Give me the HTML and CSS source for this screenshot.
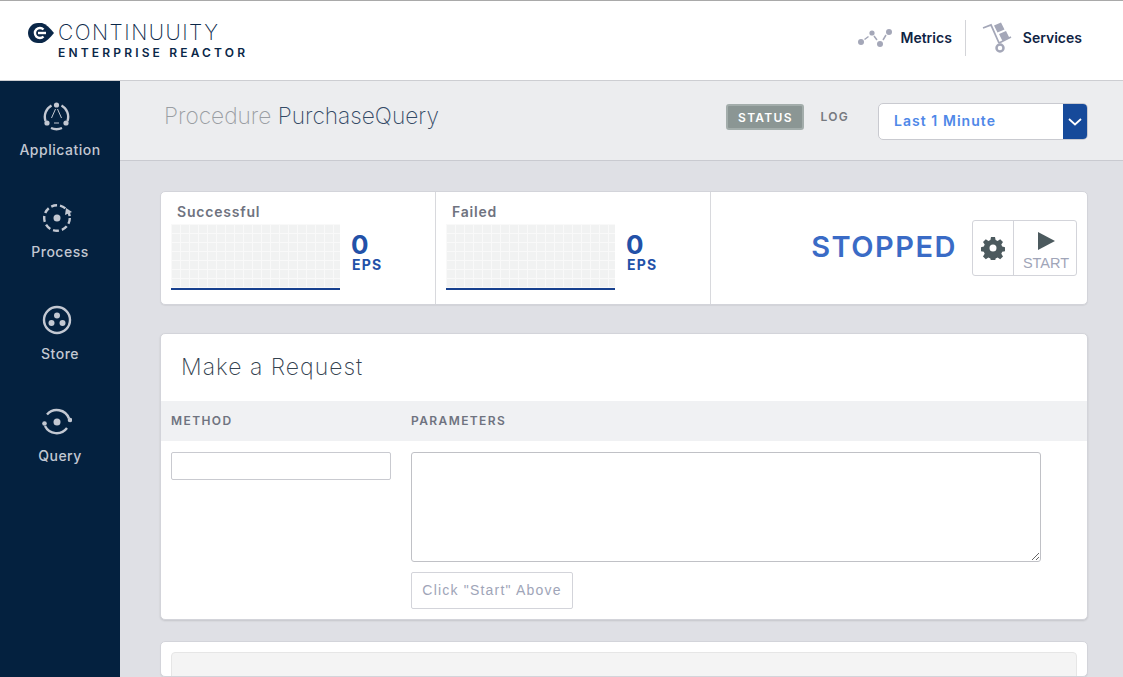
FILE: index.html
```html
<!DOCTYPE html>
<html lang="en">
<head>
<meta charset="utf-8">
<title>Procedure PurchaseQuery</title>
<link rel="stylesheet" href="styles.css">
</head>
<body>
<header class="topbar">
  <div class="logo">
    <svg class="logo-mark" width="26" height="20" viewBox="0 0 26 20"><path d="M10 0h4c4 1 8 5 12 10-4 5-8 9-12 10h-4C4 20 0 15 0 10S4 0 10 0z" fill="#0a2748"/><path d="M15.500 6.500A5 5 0 1 0 15.500 13.500" fill="none" stroke="#fff" stroke-width="2.400"/><path d="M10 10h8" stroke="#fff" stroke-width="2.400"/></svg>
    <div class="logo-text">
      <div class="logo-name">CONTINUUITY</div>
      <div class="logo-sub">ENTERPRISE REACTOR</div>
    </div>
  </div>
  <nav class="topnav">
    <div class="topnav-item">
      <svg width="34" height="18" viewBox="0 0 34 18"><g fill="#a4a7b8"><circle cx="3" cy="13" r="3"/><circle cx="14" cy="4" r="2.600"/><circle cx="22" cy="15" r="3"/><circle cx="31" cy="3" r="3"/></g><g stroke="#a4a7b8" stroke-width="1.500"><path d="M6.500 10.500l4-3M16 7l3 4M25 11l3-5"/></g></svg>
      <span>Metrics</span>
    </div>
    <div class="topnav-divider"></div>
    <div class="topnav-item services">
      <svg width="30" height="32" viewBox="0 0 30 32"><path d="M1 6l8-3 8 18M29 15L17 21" fill="none" stroke="#a4a7b8" stroke-width="1.800"/><circle cx="18" cy="26" r="3.500" fill="none" stroke="#a4a7b8" stroke-width="2.500"/><path d="M12 3.500l7-3 3.500 7-7 3zM17 12l7-3 3.500 7-7 3z" fill="#a4a7b8"/></svg>
      <span>Services</span>
    </div>
  </nav>
</header>

<div class="shell">
  <aside class="sidebar">
    <a class="side-item">
      <svg width="30" height="30" viewBox="0 0 30 30"><g fill="none" stroke="#c3c8d2" stroke-width="2.400"><path d="M3.500 20A13 13 0 0 1 9.500 4.500M19.500 4.500A13 13 0 0 1 25.500 20M9 27a14 14 0 0 0 11 0"/></g><g fill="#c3c8d2"><circle cx="14.500" cy="4" r="2.600"/><circle cx="5" cy="22" r="2.600"/><circle cx="24" cy="22" r="2.600"/></g><path d="M13.500 8l-4 9M15.500 8l4 9M12 22h5" stroke="#c3c8d2" stroke-width="1"/></svg>
      <span>Application</span>
    </a>
    <a class="side-item">
      <svg width="30" height="30" viewBox="0 0 30 30"><circle cx="15" cy="15" r="12.800" fill="none" stroke="#c3c8d2" stroke-width="2.400" stroke-dasharray="6 3"/><circle cx="15" cy="15" r="3.500" fill="#c3c8d2"/><path d="M30 9l-7 3 1-7z" fill="#c3c8d2"/></svg>
      <span>Process</span>
    </a>
    <a class="side-item">
      <svg width="30" height="30" viewBox="0 0 30 30"><circle cx="15" cy="15" r="13" fill="none" stroke="#c3c8d2" stroke-width="2.400"/><g fill="#c3c8d2"><circle cx="15" cy="10.500" r="3"/><circle cx="9.500" cy="18" r="3"/><circle cx="20.500" cy="18" r="3"/></g></svg>
      <span>Store</span>
    </a>
    <a class="side-item">
      <svg width="30" height="30" viewBox="0 0 30 30"><g fill="none" stroke="#c3c8d2" stroke-width="2.400"><path d="M5 7.500A13 13 0 0 1 27 11.500M25 21A13 13 0 0 1 3 19"/></g><g fill="#c3c8d2"><circle cx="15" cy="15" r="3.500"/><circle cx="28" cy="13" r="2.300"/><circle cx="2.500" cy="16.500" r="2.300"/></g></svg>
      <span>Query</span>
    </a>
  </aside>

  <main class="content">
    <div class="subheader">
      <h1 class="page-title"><span class="title-kind">Procedure</span> PurchaseQuery</h1>
      <div class="tabs">
        <span class="tab-active">STATUS</span>
        <span class="tab">LOG</span>
      </div>
      <div class="select">
        <span class="select-label">Last 1 Minute</span>
        <span class="select-arrow"><svg width="14" height="8" viewBox="0 0 14 8"><path d="M1 1l6 5.500L13 1" fill="none" stroke="#fff" stroke-width="1.800"/></svg></span>
      </div>
    </div>

    <div class="body">
      <section class="card stats">
        <div class="stat">
          <div class="stat-title">Successful</div>
          <div class="stat-row">
            <div class="chart"></div>
            <div class="eps"><div class="eps-num">0</div><div class="eps-unit">EPS</div></div>
          </div>
        </div>
        <div class="stat">
          <div class="stat-title">Failed</div>
          <div class="stat-row">
            <div class="chart"></div>
            <div class="eps"><div class="eps-num">0</div><div class="eps-unit">EPS</div></div>
          </div>
        </div>
        <div class="state">
          <div class="state-label">STOPPED</div>
          <div class="controls">
            <div class="control gear">
              <svg width="24" height="24" viewBox="0 0 24 24"><path fill="#4c5a5e" fill-rule="evenodd" d="M10 1h4l.6 3 2 .9 2.600-1.700 2.800 2.800-1.700 2.600.9 2 3 .6v4l-3 .6-.9 2 1.700 2.600-2.800 2.800-2.600-1.700-2 .9-.6 3h-4l-.6-3-2-.9-2.600 1.700-2.800-2.800 1.700-2.600-.9-2-3-.6v-4l3-.6.9-2-1.700-2.600 2.800-2.800 2.600 1.700 2-.9zM12 8.500a3.500 3.500 0 1 0 0 7 3.500 3.500 0 0 0 0-7z"/></svg>
            </div>
            <div class="control start">
              <svg width="17" height="18" viewBox="0 0 17 18"><path d="M0 0l17 9L0 18z" fill="#4c5a5e"/></svg>
              <span>START</span>
            </div>
          </div>
        </div>
      </section>

      <section class="card request">
        <h2 class="request-title">Make a Request</h2>
        <div class="request-head">
          <div class="col-method">METHOD</div>
          <div class="col-params">PARAMETERS</div>
        </div>
        <div class="request-body">
          <div class="col-method"><input class="method-input" type="text"></div>
          <div class="col-params">
            <textarea class="params-input"></textarea>
            <button class="run-btn" type="button">Click "Start" Above</button>
          </div>
        </div>
      </section>

      <section class="card response">
        <div class="response-box"></div>
      </section>
    </div>
  </main>
</div>
</body>
</html>
```
FILE: styles.css
```css
* { box-sizing: border-box; }
html, body { margin: 0; height: 677px; overflow: hidden; }
body { font-family: Inter, "Liberation Sans", sans-serif; background: #dfe0e5; color: #333; }

.topbar { height: 81px; background: #fff; border-top: 1px solid #a9a9a9; border-bottom: 1px solid #cdced2; display: flex; justify-content: space-between; align-items: center; padding: 0 41px 0 28px; }
.logo { display: flex; align-items: flex-start; }
.logo-mark { margin-top: 2px; margin-right: 4px; }
.logo-text { color: #0a2748; }
.logo-name { font-weight: 200; font-size: 21px; line-height: 24px; letter-spacing: 1.500px; }
.logo-sub { font-weight: 600; font-size: 12px; line-height: 14px; letter-spacing: 3.170px; margin-top: 1px; }

.topnav { display: flex; align-items: center; margin-bottom: 6px; }
.topnav-item { display: flex; align-items: center; gap: 8px; font-weight: 600; font-size: 14px; color: #0f2444; }
.topnav-divider { width: 1px; height: 36px; background: #d3d4d8; margin: 0 16px 0 13px; }
.services { gap: 11px; }

.shell { display: flex; height: 596px; }
.sidebar { width: 120px; background: #04213f; padding-top: 20px; flex: none; }
.side-item { display: flex; flex-direction: column; align-items: center; height: 102px; color: #c3c8d2; font-weight: 500; font-size: 14px; letter-spacing: .5px; }
.side-item svg { margin-left: -6px; }
.side-item span { margin-top: 10px; line-height: 17px; }

.content { flex: 1; min-width: 0; }
.subheader { height: 80px; background: #ecedef; border-bottom: 1px solid #c9cad0; display: flex; align-items: center; padding: 0 35px 0 44px; }
.page-title { margin: 0; flex: 1; font-weight: 200; font-size: 22.700px; color: #344a66; position: relative; top: -5px; }
.title-kind { color: #9a9ea3; }
.tabs { display: flex; align-items: center; gap: 16px; margin-right: 29px; margin-top: -8px; font-weight: 600; font-size: 12px; letter-spacing: 1.300px; }
.tab-active { width: 78px; height: 26px; line-height: 23px; text-align: center; background: #8b9694; color: #fff; border: 2px solid #a3adab; border-radius: 3px; }
.tab { color: #76797f; }
.select { width: 210px; height: 37px; margin-top: 1px; background: #fff; border: 1px solid #c9cad0; border-radius: 5px; display: flex; justify-content: space-between; overflow: hidden; }
.select-label { padding-left: 15px; line-height: 33px; font-weight: 600; font-size: 14px; letter-spacing: 1.050px; color: #4f88e8; }
.select-arrow { width: 24px; background: #164a9a; display: flex; align-items: center; justify-content: center; padding-top: 2px; }

.body { padding: 30px 35px 0 40px; }
.card { background: #fff; border: 1px solid #d3d4da; border-radius: 5px; box-shadow: 0 1px 1px rgba(0,0,0,.06); }

.stats { height: 114px; display: flex; }
.stat { width: 275px; padding: 11px 10px 0; border-right: 1px solid #d8d9dd; }
.stat-title { padding-left: 6px; font-weight: 600; font-size: 14px; line-height: 17px; letter-spacing: .8px; color: #6f7380; }
.stat-row { display: flex; margin-top: 4px; }
.chart { width: 169px; height: 66px; background-color: #f1f2f2; background-image: linear-gradient(#f9f9f9 1px, transparent 1px), linear-gradient(90deg, #f9f9f9 1px, transparent 1px); background-size: 9px 9px; position: relative; }
.chart::after { content: ""; position: absolute; left: 0; right: 0; top: 64px; height: 2px; background: #18418f; }
.eps { margin-left: 11px; color: #2251a8; font-weight: 700; }
.eps-num { font-size: 26px; line-height: 24px; margin-top: 9px; }
.eps-unit { font-size: 14px; line-height: 15px; letter-spacing: 1.200px; margin-left: 1px; }
.state { flex: 1; display: flex; justify-content: flex-end; align-items: flex-start; padding: 28px 10px 0 0; }
.state-label { font-weight: 600; font-size: 29px; line-height: 54px; letter-spacing: 1.500px; color: #3a6bc6; margin: 0 15px 0 0; }
.controls { display: flex; height: 56px; border: 1px solid #d3d4da; border-radius: 3px; }
.control { display: flex; flex-direction: column; align-items: center; }
.gear { width: 41px; justify-content: center; border-right: 1px solid #d3d4da; }
.start { width: 62px; padding: 11px 0 0 2px; font-family: "Liberation Sans", sans-serif; font-size: 14.500px; color: #a0a5b8; }
.start span { margin-top: 5px; line-height: 16px; }

.request { margin-top: 28px; height: 287px; box-shadow: 0 1px 2px rgba(0,0,0,.12); }
.request-title { margin: 0; height: 67px; padding-left: 20px; font-weight: 200; font-size: 23px; line-height: 66px; letter-spacing: 1px; color: #34424f; }
.request-head { display: flex; height: 40px; padding: 0 0 2px 10px; background: #f0f1f3; align-items: center; font-weight: 600; font-size: 12px; letter-spacing: 1.400px; color: #6f7380; }
.request-body { display: flex; padding: 11px 0 0 10px; }
.col-method { width: 240px; }
.col-params { width: 630px; }
.method-input { display: block; width: 220px; height: 28px; padding: 0; background: #fff; border: 1px solid #c9cad0; border-radius: 2px; }
.params-input { display: block; width: 630px; height: 110px; padding: 0; background: #fff; border: 1px solid #c0c1c6; border-radius: 3px; resize: vertical; }
.run-btn { display: block; margin-top: 10px; width: 162px; height: 37px; padding: 0 0 2px; background: #fff; border: 1px solid #d3d4da; border-radius: 2px; font-family: "Liberation Sans", sans-serif; font-size: 14px; letter-spacing: 1.200px; color: #a0a5b8; }

.response { margin-top: 21px; height: 36px; padding: 10px 10px 0; overflow: hidden; }
.response-box { height: 100px; background: #f4f4f4; border: 1px solid #e6e6e6; border-radius: 4px; }
```
